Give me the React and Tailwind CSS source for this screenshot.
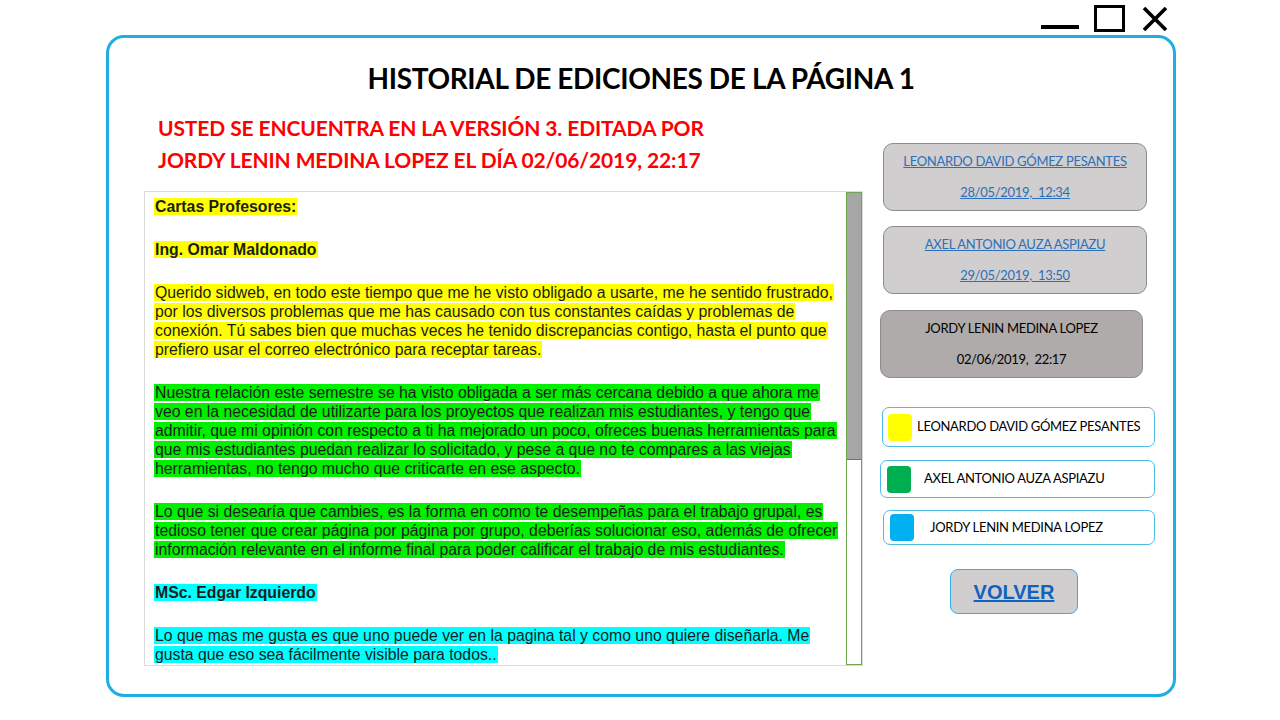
import React from 'react';

const calibri = { fontFamily: 'Lato, "Open Sans", sans-serif' };

const versions = [
    { name: 'LEONARDO DAVID GÓMEZ PESANTES', date: '28/05/2019,  12:34', current: false, cls: 'ml-[3px] w-[264px] mt-[31px]' },
    { name: 'AXEL ANTONIO AUZA ASPIAZU', date: '29/05/2019,  13:50', current: false, cls: 'ml-[3px] w-[264px] mt-[15px]' },
    { name: 'JORDY LENIN MEDINA LOPEZ', date: '02/06/2019,  22:17', current: true, cls: 'w-[263px] mt-[16px]' },
];

const authors = [
    { name: 'LEONARDO DAVID GÓMEZ PESANTES', color: 'bg-[#ffff00]', cls: 'ml-[2px] h-[40px] mt-[29px]', pad: 'pl-[5px]', gap: 'ml-[5px]' },
    { name: 'AXEL ANTONIO AUZA ASPIAZU', color: 'bg-[#00b050]', cls: 'h-[38px] mt-[13px]', pad: 'pl-[6px]', gap: 'ml-[13px]' },
    { name: 'JORDY LENIN MEDINA LOPEZ', color: 'bg-[#00b0f0]', cls: 'ml-[3px] h-[35px] mt-[12px]', pad: 'pl-[6px]', gap: 'ml-[16px]' },
];

const Para = ({ lines, bg, bold }) => (
    <p className={`leading-[19px] whitespace-nowrap ${bold ? 'font-bold' : ''}`}>
        {lines.map((l, i) => (
            <React.Fragment key={i}>
                <span className={`${bg} px-[1px]`}>{l}</span>
                {i < lines.length - 1 && <br />}
            </React.Fragment>
        ))}
    </p>
);

const App = () => {
    return (
        <div className="w-[1280px] h-[720px] bg-white relative overflow-hidden" style={calibri}>
            {/* window controls */}
            <div className="flex justify-end items-start h-[36px] pr-[112px]">
                <div className="w-[38px] h-[4px] bg-black mt-[25px]" />
                <div className="w-[31px] h-[27px] border-[3px] border-black ml-[15px] mt-[5px]" />
                <svg width="26" height="24" viewBox="0 0 26 24" className="ml-[17px] mt-[7px]">
                    <path d="M2 1 L24 23 M24 1 L2 23" stroke="black" strokeWidth="3.6" />
                </svg>
            </div>

            <div className="ml-[106px] w-[1070px] h-[662px] -mt-[1px] border-[3px] border-[#1eaee3] rounded-[18px] flex flex-col">
                <h1 className="text-center font-bold text-[28px] leading-[40px] mt-[20px] text-black tracking-[-0.35px]">
                    HISTORIAL DE EDICIONES DE LA PÁGINA 1
                </h1>

                <div className="flex mt-[14px]">
                    {/* left column */}
                    <div className="ml-[35px] w-[719px] flex flex-col">
                        <div className="ml-[14px] text-[#ff0000] font-bold text-[21px] leading-[32px] tracking-[-0.12px]">
                            <div>USTED SE ENCUENTRA EN LA VERSIÓN 3. EDITADA POR</div>
                            <div>JORDY LENIN MEDINA LOPEZ EL DÍA 02/06/2019, 22:17</div>
                        </div>

                        <div className="mt-[15px] h-[475px] border border-[#dcdcdc] flex overflow-hidden">
                            <div
                                className="flex-1 min-w-0 pl-[9px] pt-[5px] text-[15.8px] text-[#1c1c1c] flex flex-col gap-[24px]"
                                style={{ fontFamily: '"Liberation Sans", Arial, sans-serif' }}
                            >
                                <Para bold bg="bg-[#ffff00]" lines={['Cartas Profesores:']} />
                                <Para bold bg="bg-[#ffff00]" lines={['Ing. Omar Maldonado']} />
                                <Para
                                    bg="bg-[#ffff00]"
                                    lines={[
                                        'Querido sidweb, en todo este tiempo que me he visto obligado a usarte,  me he sentido frustrado,',
                                        'por los diversos problemas que me has causado con tus constantes  caídas y problemas de',
                                        'conexión. Tú  sabes bien que muchas veces he tenido discrepancias contigo, hasta el punto que',
                                        'prefiero usar  el correo electrónico para receptar tareas.',
                                    ]}
                                />
                                <Para
                                    bg="bg-[#00f000]"
                                    lines={[
                                        'Nuestra  relación  este semestre se ha visto obligada a ser más cercana debido a que ahora me',
                                        'veo en la necesidad de utilizarte  para los proyectos que realizan mis estudiantes,  y tengo que',
                                        'admitir, que mi opinión con respecto a ti ha mejorado un poco, ofreces buenas  herramientas para',
                                        'que mis estudiantes  puedan  realizar lo solicitado, y pese a que no te compares a las viejas',
                                        'herramientas,  no tengo mucho  que criticarte en ese aspecto.',
                                    ]}
                                />
                                <Para
                                    bg="bg-[#00f000]"
                                    lines={[
                                        'Lo que si desearía que cambies, es la forma en como te desempeñas para el trabajo grupal,  es',
                                        'tedioso tener que crear página por página por grupo,  deberías  solucionar  eso, además de ofrecer',
                                        'información relevante  en el informe final para poder calificar el trabajo de mis estudiantes.',
                                    ]}
                                />
                                <Para bold bg="bg-[#00ffff]" lines={['MSc. Edgar Izquierdo']} />
                                <Para
                                    bg="bg-[#00ffff]"
                                    lines={[
                                        'Lo que mas me gusta  es que uno puede ver en la pagina tal y como uno quiere diseñarla.  Me',
                                        'gusta que eso sea fácilmente visible para todos..',
                                    ]}
                                />
                            </div>
                            {/* scrollbar */}
                            <div className="w-[16px] shrink-0 h-full border border-[#6fa84c] flex flex-col">
                                <div className="h-[267px] bg-[#a6a6a6] border-b border-[#707070]" />
                            </div>
                        </div>
                    </div>

                    {/* right column */}
                    <div className="ml-[17px] w-[275px] flex flex-col">
                        {versions.map((v) => (
                            <div
                                key={v.name}
                                className={`${v.cls} h-[68px] rounded-[10px] border border-[#8c8c8c] flex flex-col items-center pt-[2px] text-[13px] leading-[31px] tracking-[-0.3px] whitespace-pre ${
                                    v.current ? 'bg-[#afabab] text-black' : 'bg-[#d0cece] text-[#2e6fb7] underline'
                                }`}
                            >
                                <span>{v.name}</span>
                                <span>{v.date}</span>
                            </div>
                        ))}

                        {authors.map((a) => (
                            <div
                                key={a.name}
                                className={`${a.cls} rounded-[7px] border border-[#4cbbe8] flex items-center ${a.pad} bg-white`}
                            >
                                <div className={`w-[24px] h-[27px] rounded-[4px] ${a.color}`} />
                                <span className={`${a.gap} text-[13px] text-black tracking-[-0.3px]`}>{a.name}</span>
                            </div>
                        ))}

                        <div className="mt-[24px] ml-[70px] w-[128px] h-[45px] rounded-[8px] border border-[#31b0e5] bg-[#d0cece] flex items-center justify-center">
                            <span
                                className="text-[#0f62c0] font-bold text-[20px] underline"
                                style={{ fontFamily: '"Liberation Sans", Arial, sans-serif' }}
                            >
                                VOLVER
                            </span>
                        </div>
                    </div>
                </div>
            </div>
        </div>
    );
};

export default App;
